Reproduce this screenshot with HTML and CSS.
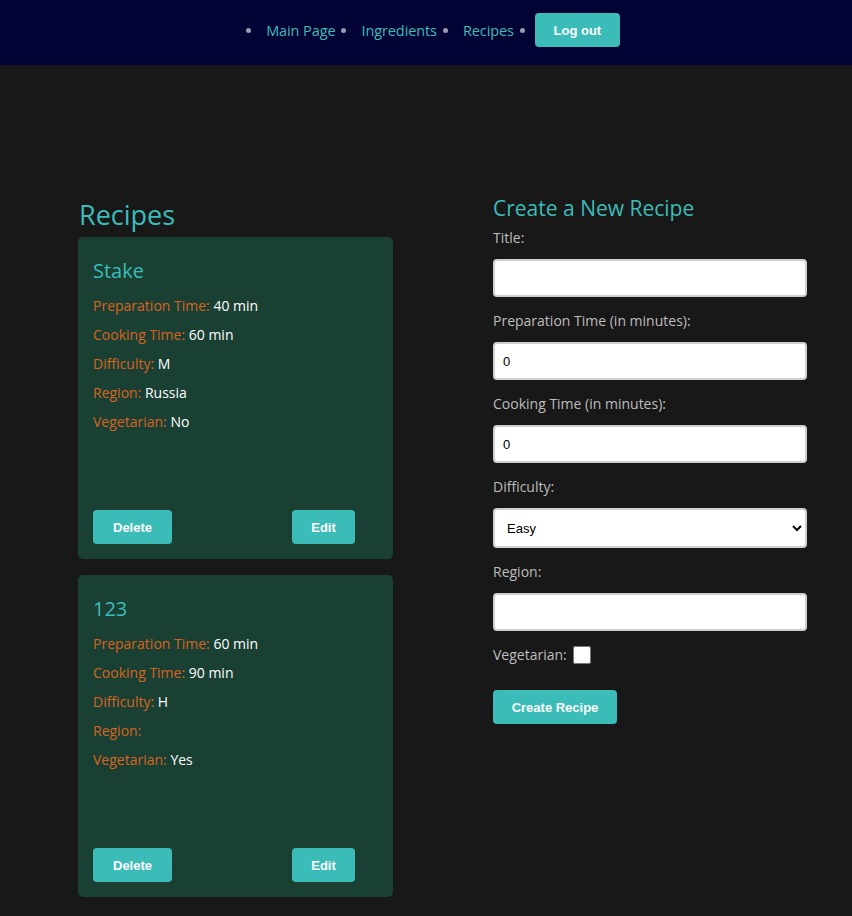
FILE: index.html
```html
<!DOCTYPE html>
<html lang="en">
<head>
<meta charset="utf-8">
<title>Recipes</title>
<link rel="stylesheet" href="styles.css">
</head>
<body>
<header class="navbar">
  <ul class="nav-list">
    <li class="nav-item"><a href="#">Main Page</a></li>
    <li class="nav-item"><a href="#">Ingredients</a></li>
    <li class="nav-item"><a href="#">Recipes</a></li>
    <li class="nav-item"><button class="btn logout">Log out</button></li>
  </ul>
</header>
<main class="main">
  <section class="recipes-col">
    <h2 class="section-title">Recipes</h2>
    <div class="card">
      <h3 class="card-title">Stake</h3>
      <p class="row"><span class="key">Preparation Time:</span> 40 min</p>
      <p class="row"><span class="key">Cooking Time:</span> 60 min</p>
      <p class="row"><span class="key">Difficulty:</span> M</p>
      <p class="row"><span class="key">Region:</span> Russia</p>
      <p class="row"><span class="key">Vegetarian:</span> No</p>
      <div class="card-actions">
        <button class="btn">Delete</button>
        <button class="btn edit">Edit</button>
      </div>
    </div>
    <div class="card">
      <h3 class="card-title">123</h3>
      <p class="row"><span class="key">Preparation Time:</span> 60 min</p>
      <p class="row"><span class="key">Cooking Time:</span> 90 min</p>
      <p class="row"><span class="key">Difficulty:</span> H</p>
      <p class="row"><span class="key">Region:</span> </p>
      <p class="row"><span class="key">Vegetarian:</span> Yes</p>
      <div class="card-actions">
        <button class="btn">Delete</button>
        <button class="btn edit">Edit</button>
      </div>
    </div>
  </section>
  <section class="form-col">
    <h2 class="form-title">Create a New Recipe</h2>
    <form class="form">
      <label class="label">Title:</label>
      <input class="field" type="text">
      <label class="label">Preparation Time (in minutes):</label>
      <input class="field" type="number" value="0">
      <label class="label">Cooking Time (in minutes):</label>
      <input class="field" type="number" value="0">
      <label class="label">Difficulty:</label>
      <select class="field select">
        <option>Easy</option>
        <option>Medium</option>
        <option>Hard</option>
      </select>
      <label class="label">Region:</label>
      <input class="field" type="text">
      <div class="veg-row">
        <label class="label inline">Vegetarian:</label>
        <input class="check" type="checkbox">
      </div>
      <div class="submit-row"><button class="btn create" type="button">Create Recipe</button></div>
    </form>
  </section>
</main>
</body>
</html>
```

FILE: styles.css
```css
* { box-sizing: border-box; }

body {
  margin: 0;
  background: #181818;
  font-family: "Open Sans", "Noto Sans", sans-serif;
  color: #ffffff;
  min-height: 916px;
}

.navbar {
  background: #000333;
  height: 65px;
  display: flex;
  justify-content: center;
  align-items: center;
  padding-bottom: 5px;
}

.nav-list {
  list-style: none;
  margin: 0;
  padding: 0 0 0 8px;
  display: flex;
  align-items: center;
}

.nav-item {
  display: flex;
  align-items: center;
  margin-left: 6px;
}

.nav-item::before {
  content: "";
  width: 5px;
  height: 5px;
  border-radius: 50%;
  background: #9a9ab0;
  margin-right: 15px;
}

.nav-item a {
  color: #3bbcb8;
  text-decoration: none;
  font-size: 14.5px;
  letter-spacing: -0.1px;
}

.btn {
  background: #3bbcb8;
  color: #ffffff;
  border: none;
  border-radius: 4px;
  height: 34px;
  padding: 0 20px;
  font-family: "Liberation Sans", Arial, sans-serif;
  font-weight: bold;
  font-size: 13px;
  cursor: pointer;
}

.logout {
  width: 85px;
  padding: 0;
  margin-left: -5px;
}

.edit {
  width: 63px;
  padding: 0;
}

.create {
  width: 124px;
  padding: 0;
}

.main {
  display: grid;
  grid-template-columns: 315px 314px;
  column-gap: 100px;
  padding: 0 0 20px 78px;
}

.section-title {
  color: #3bbcb8;
  font-weight: normal;
  font-size: 27px;
  margin: 132px 0 4px 1px;
  line-height: 36px;
}

.card {
  background: #1a4034;
  border-radius: 5px;
  padding: 20px 15px 15px 15px;
  height: 322px;
  display: flex;
  flex-direction: column;
  margin-bottom: 16px;
}

.card-title {
  color: #3bbcb8;
  font-weight: normal;
  font-size: 20px;
  line-height: 28px;
  margin: 0 0 6px 0;
}

.row {
  margin: 0;
  font-size: 14px;
  line-height: 29px;
  color: #ffffff;
}

.key {
  color: #d8641e;
}

.card-actions {
  margin-top: auto;
  display: flex;
  justify-content: space-between;
  padding-right: 23px;
}

.form-col {
  padding-top: 128px;
}

.form-title {
  color: #3bbcb8;
  font-weight: normal;
  font-size: 21px;
  line-height: 30px;
  margin: 0 0 2px 0;
}

.form {
  display: flex;
  flex-direction: column;
}

.label {
  color: #bdbdbd;
  font-size: 14px;
  line-height: 22px;
  margin-top: 2px;
}

.field {
  width: 314px;
  height: 38px;
  margin: 10px 0 11px 0;
  background: #ffffff;
  border: 2px solid #cfcfcf;
  border-radius: 4px;
  padding: 0 8px;
  font-family: "Liberation Sans", Arial, sans-serif;
  font-size: 13px;
  color: #000000;
}

.select {
  height: 40px;
  padding: 0 8px;
}

.veg-row {
  display: flex;
  align-items: center;
  margin-top: 2px;
}

.label.inline {
  margin-top: 0;
}

.check {
  width: 18px;
  height: 18px;
  margin: 0 0 0 6px;
}

.submit-row {
  margin-top: 24px;
}
```
